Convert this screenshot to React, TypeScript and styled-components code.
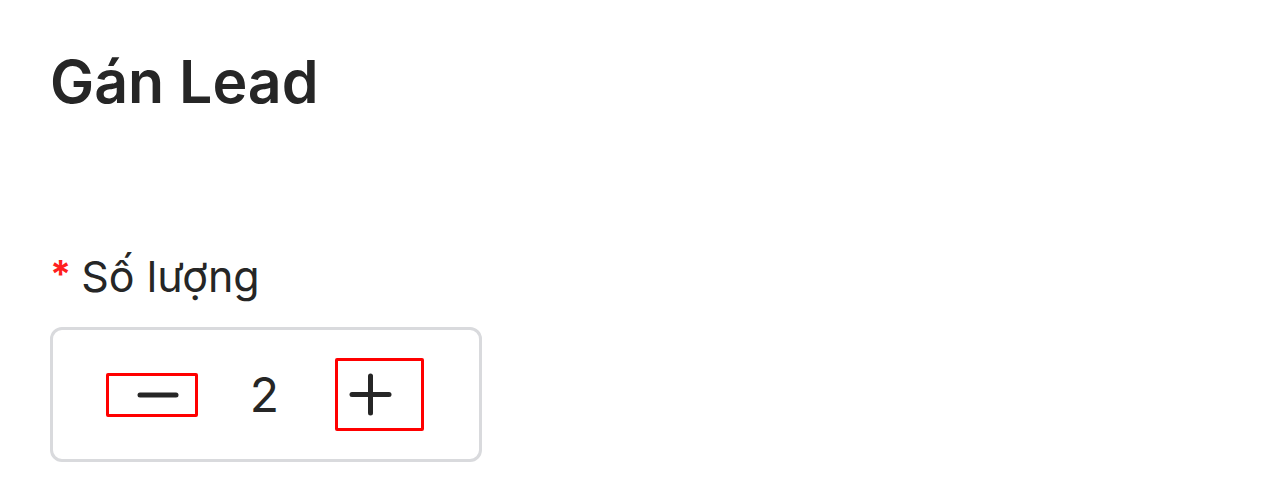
import styled, { createGlobalStyle } from 'styled-components'

const GlobalStyle = createGlobalStyle`
  html, body {
    margin: 0;
    padding: 0;
    background: #ffffff;
  }
  body {
    font-family: Inter, 'Noto Sans', sans-serif;
    color: #262626;
  }
`

export default function App() {
  return (
    <>
      <GlobalStyle />
      <Page>
        <Title>Gán Lead</Title>
        <Field>
          <Label>
            <Required>*</Required>
            Số lượng
          </Label>
          <Stepper>
            <MinusButton aria-label="decrease">
              <svg width="42" height="6" viewBox="0 0 42 6">
                <line
                  x1="3"
                  y1="3"
                  x2="39"
                  y2="3"
                  stroke="#262626"
                  strokeWidth="5"
                  strokeLinecap="round"
                />
              </svg>
            </MinusButton>
            <Count>2</Count>
            <PlusButton aria-label="increase">
              <svg width="43" height="43" viewBox="0 0 43 43">
                <g stroke="#262626" strokeWidth="5" strokeLinecap="round">
                  <line x1="3" y1="21.5" x2="40" y2="21.5" />
                  <line x1="21.5" y1="3" x2="21.5" y2="40" />
                </g>
              </svg>
            </PlusButton>
          </Stepper>
        </Field>
      </Page>
    </>
  )
}

const Page = styled.div`
  padding: 40px 50px;
`

const Title = styled.h1`
  margin: 0;
  font-size: 59px;
  line-height: 84px;
  font-weight: 600;
  letter-spacing: 0;
`

const Field = styled.div`
  margin-top: 126px;
`

const Label = styled.div`
  display: flex;
  align-items: center;
  font-size: 43px;
  line-height: 52px;
  font-weight: 400;
`

const Required = styled.span`
  color: #ff1f1f;
  font-size: 38px;
  font-weight: 700;
  margin-right: 10px;
  margin-top: -4px;
`

const Stepper = styled.div`
  margin-top: 25px;
  width: 432px;
  height: 135px;
  box-sizing: border-box;
  border: 3px solid #d9dadd;
  border-radius: 12px;
  display: flex;
  align-items: center;
  padding-left: 53px;
`

const BaseButton = styled.button`
  display: flex;
  align-items: center;
  box-sizing: border-box;
  background: transparent;
  border: 3px solid #ff0000;
  border-radius: 2px;
  margin: 0;
  cursor: pointer;
`

const MinusButton = styled(BaseButton)`
  width: 92px;
  height: 44px;
  padding: 0 0 0 28px;
`

const PlusButton = styled(BaseButton)`
  width: 89px;
  height: 73px;
  padding: 0 0 0 11px;
`

const Count = styled.span`
  width: 137px;
  box-sizing: border-box;
  padding-right: 4px;
  text-align: center;
  font-size: 48px;
  line-height: 1;
`
